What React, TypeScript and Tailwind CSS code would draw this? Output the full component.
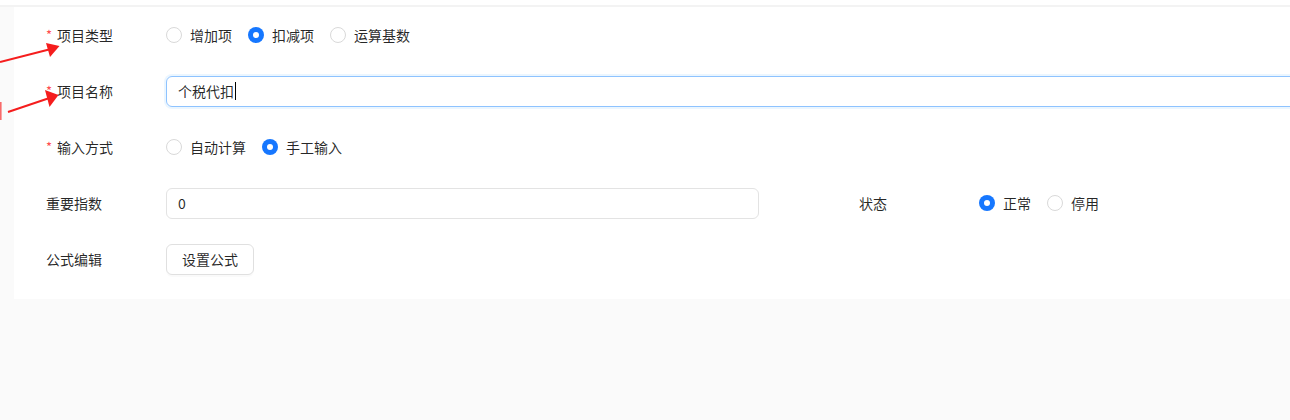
const font = { fontFamily: '"Noto Sans CJK SC", "Noto Sans", sans-serif' };

function Radio({ label, checked }: { label: string; checked?: boolean }) {
  return (
    <label className="flex items-center mr-2 cursor-pointer">
      {checked ? (
        <span className="w-4 h-4 rounded-full bg-[#1677ff] flex items-center justify-center">
          <span className="w-[6px] h-[6px] rounded-full bg-white" />
        </span>
      ) : (
        <span className="w-4 h-4 rounded-full border border-[#d9d9d9] bg-white" />
      )}
      <span className="px-2">{label}</span>
    </label>
  );
}

function Label({ text, required }: { text: string; required?: boolean }) {
  return (
    <div className="w-[120px] shrink-0 flex items-center">
      {required && <span className="w-[7px] mr-[4px] text-[#ff4d4f] text-[13px]">*</span>}
      <span>{text}</span>
    </div>
  );
}

export default function App() {
  return (
    <div className="relative w-[1290px] h-[420px] overflow-hidden bg-[#fafafa] text-sm text-[rgba(0,0,0,0.85)]" style={font}>
      <div className="h-[5px] bg-white" />
      <div className="h-[2px] bg-[#f3f3f3]" />
      <div className="ml-[14px] w-[1400px] bg-white pt-3 pb-6 pl-8 flex flex-col gap-6">
        {/* 项目类型 */}
        <div className="flex items-center h-8">
          <Label text="项目类型" required />
          <div className="flex items-center">
            <Radio label="增加项" />
            <Radio label="扣减项" checked />
            <Radio label="运算基数" />
          </div>
        </div>

        {/* 项目名称 */}
        <div className="flex items-center h-8">
          <Label text="项目名称" required />
          <div className="w-[1200px] h-[31px] rounded-md border border-[#8ec3ff] shadow-[0_0_0_2px_rgba(5,145,255,0.08)] px-[11px] flex items-center">
            <span>个税代扣</span>
            <span className="w-px h-[18px] bg-black ml-[1px]" />
          </div>
        </div>

        {/* 输入方式 */}
        <div className="flex items-center h-8">
          <Label text="输入方式" required />
          <div className="flex items-center">
            <Radio label="自动计算" />
            <Radio label="手工输入" checked />
          </div>
        </div>

        {/* 重要指数 / 状态 */}
        <div className="flex items-center h-8">
          <Label text="重要指数" />
          <div className="w-[593px] h-[31px] rounded-md border border-[#e3e3e3] px-[11px] flex items-center">0</div>
          <div className="ml-[100px] w-[120px] shrink-0">状态</div>
          <div className="flex items-center">
            <Radio label="正常" checked />
            <Radio label="停用" />
          </div>
        </div>

        {/* 公式编辑 */}
        <div className="flex items-center h-8">
          <Label text="公式编辑" />
          <button className="h-[31px] px-[15px] rounded-md border border-[#e0e0e0] bg-white shadow-[0_2px_0_rgba(0,0,0,0.02)]">
            设置公式
          </button>
        </div>
      </div>

      {/* annotation arrows */}
      <svg className="absolute left-0 top-0" width="70" height="130" viewBox="0 0 70 130">
        <line x1="0" y1="62" x2="49" y2="49.5" stroke="#f51d1d" strokeWidth="2" />
        <polygon points="46,43 50,57 59.5,46" fill="#f51d1d" />
        <line x1="8" y1="112" x2="48" y2="98.5" stroke="#f51d1d" strokeWidth="2" />
        <polygon points="45,90 49.5,107 58.5,95" fill="#f51d1d" />
        <line x1="0.8" y1="102" x2="0.8" y2="120" stroke="#f86a6a" strokeWidth="1.6" />
      </svg>
    </div>
  );
}
